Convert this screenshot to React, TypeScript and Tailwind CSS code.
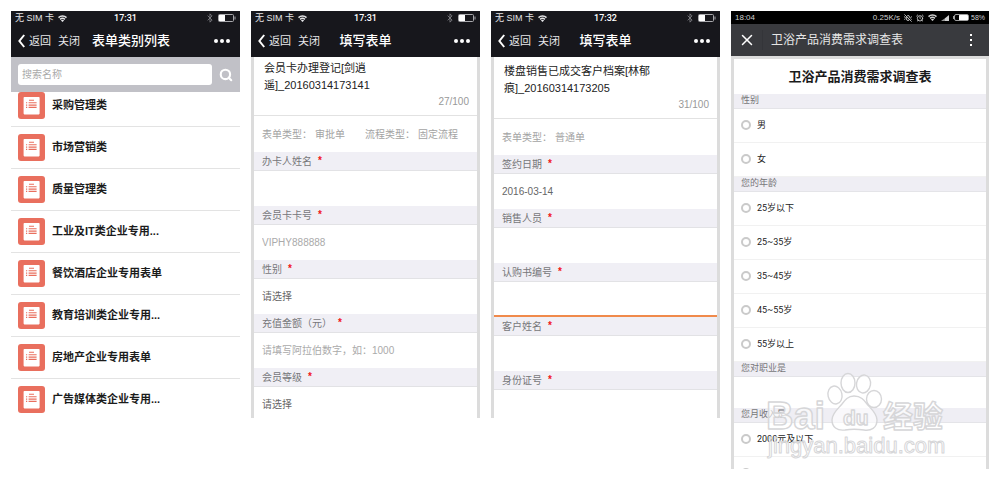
import React, { useState } from 'react';
import { Bluetooth, Search, X, AlarmClock, VibrateOff } from 'lucide-react';

const categories = [
    '采购管理类',
    '市场营销类',
    '质量管理类',
    '工业及IT类企业专用...',
    '餐饮酒店企业专用表单',
    '教育培训类企业专用...',
    '房地产企业专用表单',
    '广告媒体类企业专用...',
];

const ages = ['25岁以下', '25~35岁', '35~45岁', '45~55岁', '55岁以上'];

interface Field {
    id: string;
    label: string;
    kind: 'text' | 'select';
    value?: string;
    placeholder?: string;
    error?: boolean;
}

const memberFields: Field[] = [
    { id: 'member-name', label: '办卡人姓名', kind: 'text' },
    { id: 'member-card', label: '会员卡卡号', kind: 'text', placeholder: 'VIPHY888888' },
    { id: 'member-gender', label: '性别', kind: 'select' },
    { id: 'member-amount', label: '充值金额（元）', kind: 'text', placeholder: '请填写阿拉伯数字，如：1000' },
    { id: 'member-level', label: '会员等级', kind: 'select' },
];

const salesFields: Field[] = [
    { id: 'sales-date', label: '签约日期', kind: 'text', value: '2016-03-14' },
    { id: 'sales-staff', label: '销售人员', kind: 'text' },
    { id: 'sales-number', label: '认购书编号', kind: 'text', error: true },
    { id: 'sales-customer', label: '客户姓名', kind: 'text' },
    { id: 'sales-idcard', label: '身份证号', kind: 'text' },
];

function WifiIcon() {
    return (
        <svg width="9" height="7" viewBox="0 0 18 14" fill="none" stroke="currentColor" strokeWidth="3" aria-hidden="true">
            <path d="M1 5.2a11.5 11.5 0 0 1 16 0" />
            <path d="M4.2 8.8a7 7 0 0 1 9.6 0" />
            <path d="M9 14 5.8 11a4.4 4.4 0 0 1 6.4 0z" fill="currentColor" stroke="none" />
        </svg>
    );
}

function ListIcon() {
    return (
        <svg width="27" height="27" viewBox="0 0 27 27" className="shrink-0" aria-hidden="true">
            <rect width="27" height="27" rx="3" fill="#e96f5e" />
            <rect x="5.6" y="5" width="16" height="17.4" rx="0.8" fill="#fff" />
            <path d="M11 8.2h5M10.6 10.8h8M10.6 13.1h8M10.6 15.4h8M8 10.8h1.2M8 13.1h1.2M8 15.4h1.2" stroke="#e96f5e" strokeWidth="1.1" />
        </svg>
    );
}

function PhoneHeader({ time, title }: { time: string; title: string }) {
    return (
        <header className="bg-[#17171c] text-white">
            <div className="grid h-[14px] grid-cols-[1fr_auto_1fr] items-center pl-1 pr-1 text-[9px] leading-none">
                <div className="flex items-center gap-1 text-[#e4e4e6]">
                    <span>无 SIM 卡</span>
                    <WifiIcon />
                </div>
                <span className="font-['Roboto'] font-medium leading-[12px]">{time}</span>
                <div className="flex items-center justify-end gap-[3px]">
                    <Bluetooth size={10} className="text-[#85858a]" />
                    <svg width="18" height="8" viewBox="0 0 18 8" aria-hidden="true">
                        <rect x="0.5" y="0.5" width="15" height="7" rx="1" fill="none" stroke="#aaaaae" />
                        <rect x="1" y="1" width="6" height="6" fill="#fff" />
                        <path d="M17 2.5v3" stroke="#aaaaae" />
                    </svg>
                </div>
            </div>
            <div className="grid h-8 grid-cols-[1fr_auto_1fr] items-center">
                <div className="flex items-center pl-[7px] pr-3 text-[11px] text-[#e8e8ea]">
                    <button type="button" className="flex items-center gap-1 whitespace-nowrap">
                        <svg width="7" height="14" viewBox="0 0 7 14" fill="none" stroke="#fff" strokeWidth="2" aria-hidden="true">
                            <path d="M6.2 1 1.4 7l4.8 6" />
                        </svg>
                        返回
                    </button>
                    <button type="button" className="ml-[7px] whitespace-nowrap">关闭</button>
                </div>
                <h2 className="whitespace-nowrap text-[13px] font-medium">{title}</h2>
                <button type="button" aria-label="更多" className="flex items-center justify-end gap-[2px] pr-[10px]">
                    <span className="size-1 rounded-full bg-white" />
                    <span className="size-1 rounded-full bg-white" />
                    <span className="size-1 rounded-full bg-white" />
                </button>
            </div>
        </header>
    );
}

function CategoryPhone() {
    const [keyword, setKeyword] = useState('');

    return (
        <section>
            <PhoneHeader time="17:31" title="表单类别列表" />
            <form className="flex h-[35px] items-center bg-[#c1c1c7] pl-[7px]" onSubmit={(e) => e.preventDefault()}>
                <input
                    type="search"
                    aria-label="搜索名称"
                    placeholder="搜索名称"
                    value={keyword}
                    onChange={(e) => setKeyword(e.target.value)}
                    className="h-[21px] min-w-0 flex-1 rounded-[3px] bg-white px-1 text-[10px] placeholder:text-[#aaa] outline-none"
                />
                <button type="submit" aria-label="搜索" className="flex w-7 justify-center text-white">
                    <Search size={14} strokeWidth={3.6} />
                </button>
            </form>
            <div className="overflow-hidden">
                <ul className="-mt-[7px]">
                    {categories.map((name) => (
                        <li key={name} className="border-b border-[#e3e3e3] last:border-b-0">
                            <a href="#" className="flex h-[41px] items-center gap-[7px] pl-[7px] text-[11px] font-bold text-[#1c1c1c]">
                                <ListIcon />
                                {name}
                            </a>
                        </li>
                    ))}
                </ul>
            </div>
        </section>
    );
}

function FormField({ field }: { field: Field }) {
    return (
        <div>
            <label
                htmlFor={field.id}
                className="flex h-[19px] items-center gap-[6px] border-b border-[#e2e2e5] bg-[#f0eff5] pl-2 text-[10px] text-[#77777a]"
            >
                {field.label}
                <span className="font-bold leading-none text-[#f0151b]">*</span>
            </label>
            <div className={`flex h-[35px] items-center ${field.error ? 'border-b-2 border-[#f08a4b]' : ''}`}>
                {field.kind === 'select' ? (
                    <select id={field.id} className="w-full appearance-none bg-transparent px-2 text-[10px] text-[#666] outline-none">
                        <option>请选择</option>
                    </select>
                ) : (
                    <input
                        id={field.id}
                        type="text"
                        defaultValue={field.value}
                        placeholder={field.placeholder}
                        className="w-full bg-transparent px-2 text-[10px] text-[#666] placeholder:text-[#aaa] outline-none"
                    />
                )}
            </div>
        </div>
    );
}

interface FormPhoneProps {
    time: string;
    title: string;
    count: string;
    types: [string, string][];
    fields: Field[];
    roomy?: boolean;
}

function FormPhone({ time, title, count, types, fields, roomy }: FormPhoneProps) {
    return (
        <section>
            <PhoneHeader time={time} title="填写表单" />
            <div className="h-[361px] overflow-hidden border-x-[3px] border-[#dcdcdc] bg-white">
                <div className={`border-b border-[#e2e2e2] px-[10px] ${roomy ? 'pt-[6px]' : 'pt-[3px]'}`}>
                    <textarea
                        aria-label="表单标题"
                        rows={2}
                        defaultValue={title}
                        className="block h-[34px] w-full resize-none overflow-hidden text-[11px] leading-[17px] text-[#222] outline-none"
                    />
                    <p className="-mr-[2px] h-[21px] pt-[1px] text-right text-[10px] leading-[14px] text-[#999]">{count}</p>
                </div>
                <div className="flex h-9 items-center gap-5 pl-2 text-[10px] text-[#a3a3a3]">
                    {types.map(([name, value]) => (
                        <span key={name} className="flex gap-[3px]">
                            <span>{name}：</span>
                            <span>{value}</span>
                        </span>
                    ))}
                </div>
                {fields.map((field) => (
                    <FormField key={field.id} field={field} />
                ))}
            </div>
        </section>
    );
}

function SectionBar({ children }: { children: React.ReactNode }) {
    return (
        <h3 className="flex h-[15px] items-center border-b border-[#e4e4e8] bg-[#efeef4] pl-[7px] text-[9px] text-[#77777a]">
            {children}
        </h3>
    );
}

function RadioRow({ name, label }: { name: string; label: string }) {
    return (
        <label className="flex h-[34px] items-center gap-[6px] border-b border-[#f1f1f1] pl-[7px] font-['Roboto','Noto_Sans_CJK_SC',sans-serif] text-[9px] text-[#1c1c1c]">
            <input
                type="radio"
                name={name}
                className="mb-[2px] size-[10px] appearance-none rounded-full border-2 border-[#cacaca] bg-white checked:border-[#17171c]"
            />
            {label}
        </label>
    );
}

function Watermark() {
    return (
        <svg
            width="182"
            height="90"
            viewBox="0 0 182 90"
            aria-hidden="true"
            className="pointer-events-none absolute bottom-[7px] right-[42px] font-['Liberation_Sans','Noto_Sans_CJK_SC',sans-serif]"
        >
            <g fill="#fff" fillOpacity="0.6" stroke="#d6d6d8" strokeWidth="1.4" strokeLinejoin="round">
                <text x="1" y="57" fontSize="38" fontWeight="bold">Bai</text>
                <ellipse cx="70" cy="23" rx="7" ry="9" transform="rotate(-12 70 23)" />
                <ellipse cx="83" cy="11" rx="7" ry="9.5" />
                <ellipse cx="98.5" cy="12" rx="7" ry="9" transform="rotate(10 98.5 12)" />
                <ellipse cx="109" cy="27" rx="7.5" ry="8.5" />
                <path d="M89 24c7 0 10 4 13 8 4 5 10 9 10 16 0 8-6 11-13 10-7-1-13-1-19 0-8 1-13-3-13-10 0-7 6-11 10-16 3-4 6-8 12-8z" />
                <text x="78" y="53" fontSize="21" fontWeight="bold">du</text>
                <text x="118" y="55" fontSize="30" fontWeight="bold">经验</text>
                <text x="3" y="81" fontSize="22" strokeWidth="1">jingyan.baidu.com</text>
            </g>
        </svg>
    );
}

function SurveyPhone() {
    return (
        <section className="relative">
            <header className="text-white">
                <div className="flex h-[13px] items-center justify-between bg-black pl-1 pr-1 text-[8px] leading-none text-[#d0d0d0]">
                    <span>18:04</span>
                    <div className="flex items-center gap-1">
                        <span>0.25K/s</span>
                        <VibrateOff size={8} strokeWidth={2.6} />
                        <AlarmClock size={8} strokeWidth={2.6} />
                        <WifiIcon />
                        <svg width="8" height="6" viewBox="0 0 8 6" aria-hidden="true">
                            <path d="M0 6 4 3.2V6z" fill="#999" />
                            <path d="M4 6V3.2L8 0v6z" fill="#d0d0d0" />
                        </svg>
                        <span className="flex items-center gap-[2px]">
                            <svg width="16" height="7" viewBox="0 0 16 7" aria-hidden="true">
                                <rect x="1.5" y="0.5" width="14" height="6" rx="1.5" fill="none" stroke="#a0a0a0" />
                                <path d="M0.5 2v3" stroke="#a0a0a0" />
                                <rect x="6" y="1" width="9" height="5" rx="0.5" fill="#fff" />
                            </svg>
                            <span className="text-[7px]">58%</span>
                        </span>
                    </div>
                </div>
                <div className="flex h-8 items-center bg-[#393a3e]">
                    <button type="button" aria-label="关闭" className="flex h-5 w-8 items-center justify-center border-r border-[#343539]">
                        <X size={18} strokeWidth={2} />
                    </button>
                    <h2 className="ml-2 flex-1 whitespace-nowrap text-[12px] text-[#e6e6e6]">卫浴产品消费需求调查表</h2>
                    <button type="button" aria-label="更多" className="flex flex-col gap-[3px] pr-[17px]">
                        <span className="size-[2px] bg-white" />
                        <span className="size-[2px] bg-white" />
                        <span className="size-[2px] bg-white" />
                    </button>
                </div>
            </header>
            <div className="border-x-[3px] border-t-[3px] border-[#dcdcdc] bg-white">
                <h1 className="flex h-[35px] items-center justify-center text-[13px] font-bold text-[#1a1a1a]">卫浴产品消费需求调查表</h1>
                <SectionBar>性别</SectionBar>
                <RadioRow name="gender" label="男" />
                <RadioRow name="gender" label="女" />
                <SectionBar>您的年龄</SectionBar>
                {ages.map((age) => (
                    <RadioRow key={age} name="age" label={age} />
                ))}
                <SectionBar>您对职业是</SectionBar>
                <input type="text" aria-label="您对职业是" className="block h-[31px] w-full px-2 text-[9px] outline-none" />
                <SectionBar>您月收入是</SectionBar>
                <RadioRow name="income" label="2000元及以下" />
                <div className="h-3 overflow-hidden">
                    <RadioRow name="income" label="" />
                </div>
            </div>
            <Watermark />
        </section>
    );
}

function App() {
    return (
        <main className="grid grid-cols-[229fr_229fr_229fr_258fr] items-start gap-[11px] bg-white p-[11px] font-['Liberation_Sans','Noto_Sans_CJK_SC',sans-serif]">
            <CategoryPhone />
            <FormPhone
                time="17:31"
                title="会员卡办理登记[剑逍遥]_20160314173141"
                count="27/100"
                types={[['表单类型', '审批单'], ['流程类型', '固定流程']]}
                fields={memberFields}
            />
            <FormPhone
                time="17:32"
                title="楼盘销售已成交客户档案[林郁痕]_20160314173205"
                count="31/100"
                types={[['表单类型', '普通单']]}
                fields={salesFields}
                roomy
            />
            <SurveyPhone />
        </main>
    );
}

export default App;
